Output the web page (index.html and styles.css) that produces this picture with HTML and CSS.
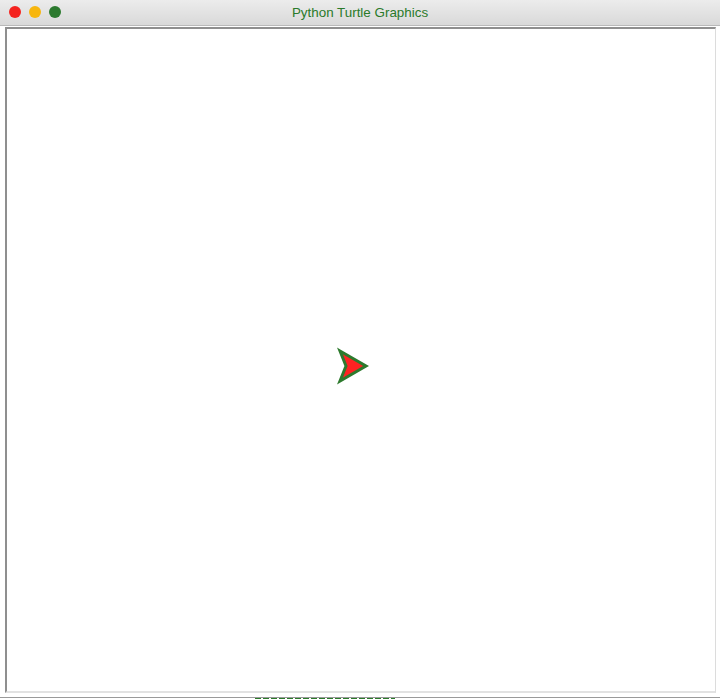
FILE: index.html
```html
<!DOCTYPE html>
<html>
<head>
<meta charset="utf-8">
<title>Python Turtle Graphics</title>
<link rel="stylesheet" href="styles.css">
</head>
<body>
<div class="window">
  <div class="titlebar">
    <div class="lights">
      <span class="light red"></span>
      <span class="light yellow"></span>
      <span class="light green"></span>
    </div>
    <div class="title">Python Turtle Graphics</div>
  </div>
  <div class="body">
    <div class="canvas">
      <svg class="turtle" width="34" height="38" viewBox="0 0 34 38">
        <polygon points="4,4 30,19 4,34 10,19" fill="#ff2222" stroke="#2d7a2d" stroke-width="3" stroke-linejoin="miter"/>
      </svg>
    </div>
  </div>
  <div class="footer"><span class="dash"></span></div>
</div>
</body>
</html>
```
FILE: styles.css
```css
html, body {
  margin: 0;
  padding: 0;
  background: #ffffff;
}
.window {
  width: 720px;
  height: 699px;
  display: flex;
  flex-direction: column;
  overflow: hidden;
  position: relative;
}
.titlebar {
  height: 26px;
  flex: none;
  background: linear-gradient(#ececec, #d9d9d9);
  border-bottom: 1px solid #b9b9b9;
  box-sizing: border-box;
  position: relative;
  display: flex;
  align-items: center;
  justify-content: center;
}
.lights {
  position: absolute;
  left: 9px;
  top: 6px;
  display: flex;
  gap: 8px;
}
.light {
  width: 12px;
  height: 12px;
  border-radius: 50%;
  display: block;
}
.red { background: #f4231f; }
.yellow { background: #f7b60e; }
.green { background: #2c7a2f; }
.title {
  font-family: "Liberation Sans", Arial, sans-serif;
  font-size: 13.4px;
  color: #2a7a2a;
  margin-top: -1px;
}
.body {
  flex: 1;
  padding: 1px 4px 4px 5px;
  border-bottom: 1px solid #9a9a9a;
  display: flex;
}
.canvas {
  flex: 1;
  position: relative;
  background: #ffffff;
  border-left: 2px solid #8f8f8f;
  border-top: 2px solid #8f8f8f;
  border-right: 1px solid #dcdcdc;
  border-bottom: 2px solid #e2e2e2;
}
.turtle {
  position: absolute;
  left: 329px;
  top: 318px;
}
.footer {
  height: 1px;
  flex: none;
  display: flex;
  justify-content: flex-start;
}
.dash {
  margin-left: 255px;
  width: 140px;
  height: 1px;
  background: repeating-linear-gradient(90deg, #2a7a2a 0 6px, #ffffff 6px 8px);
}
```
